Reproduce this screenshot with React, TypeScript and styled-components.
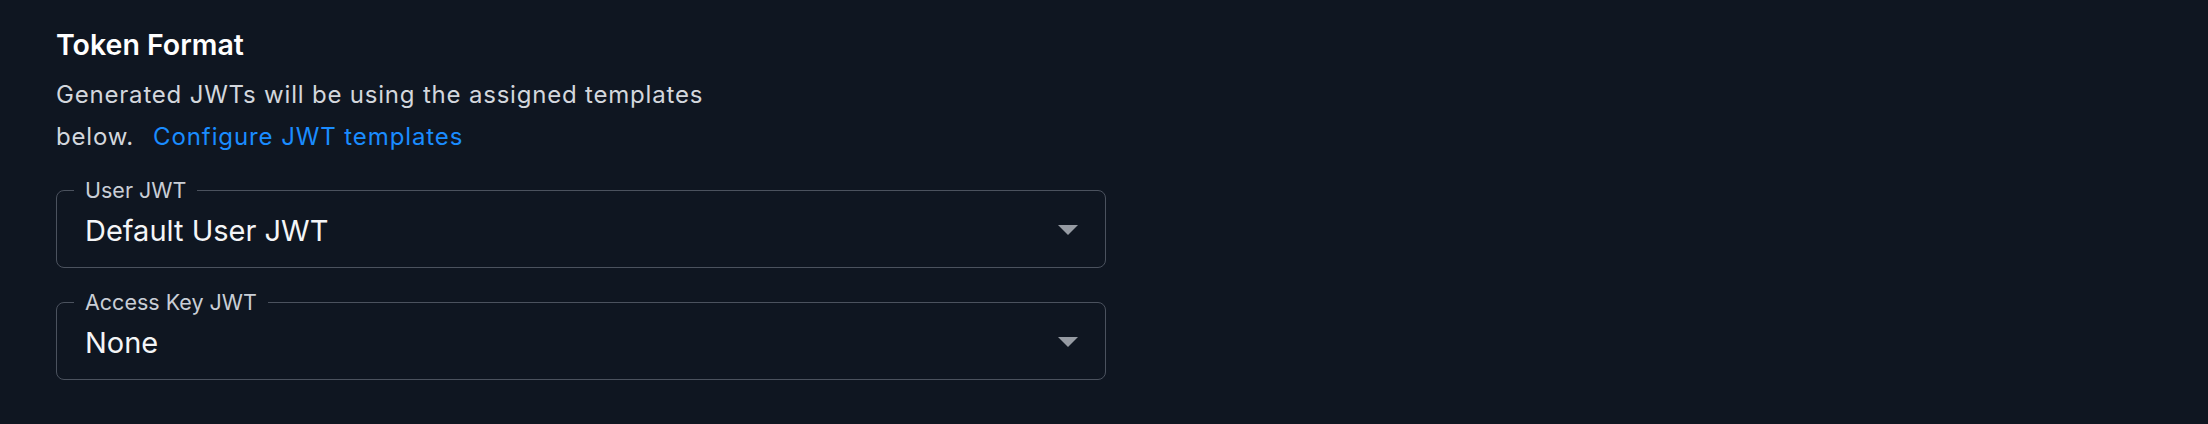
import React from "react";
import styled, { createGlobalStyle } from "styled-components";

const GlobalStyle = createGlobalStyle`
  html, body {
    margin: 0;
    padding: 0;
    background: #0f1621;
  }
  body {
    font-family: Inter, "Noto Sans", sans-serif;
    -webkit-font-smoothing: antialiased;
  }
`;

const Page = styled.div`
  min-height: 424px;
  background: #0f1621;
  padding: 25px 0 0 56px;
  box-sizing: border-box;
`;

const Section = styled.section`
  display: flex;
  flex-direction: column;
  width: 1050px;
`;

const Title = styled.h2`
  margin: 0;
  font-size: 28.5px;
  line-height: 40px;
  font-weight: 600;
  color: #ffffff;
  letter-spacing: 0;
`;

const Description = styled.p`
  margin: 9px 0 0;
  max-width: 700px;
  font-size: 24px;
  line-height: 42px;
  font-weight: 400;
  letter-spacing: 0.8px;
  color: #d3d7dd;
`;

const Link = styled.a`
  margin-left: 19px;
  letter-spacing: 0.9px;
  color: #1a8cff;
  text-decoration: none;
  cursor: pointer;
`;

const Fields = styled.div`
  display: flex;
  flex-direction: column;
  gap: 21px;
  margin-top: 19px;
`;

const Field = styled.fieldset`
  margin: 0;
  padding: 0 27px 0 28px;
  min-width: 0;
  border: 1.4px solid #4b525e;
  border-radius: 8px;
  display: block;
`;

const Legend = styled.legend`
  margin-left: -11px;
  padding: 0 11px;
  font-size: 21.5px;
  line-height: 26px;
  color: #c9ced6;
`;

const Row = styled.div`
  display: flex;
  align-items: center;
  justify-content: space-between;
  padding: 9.5px 0 18.5px;
`;

const Value = styled.span`
  font-size: 29px;
  line-height: 36px;
  color: #f4f5f7;
`;

const Caret = styled.svg`
  width: 20px;
  height: 10px;
  flex: none;
  margin-top: -1px;
`;

const SelectField: React.FC<{ label: string; value: string }> = ({ label, value }) => (
  <Field>
    <Legend>{label}</Legend>
    <Row>
      <Value>{value}</Value>
      <Caret viewBox="0 0 20 10">
        <polygon points="0,0 20,0 10,10" fill="#969ba3" />
      </Caret>
    </Row>
  </Field>
);

export default function App() {
  return (
    <>
      <GlobalStyle />
      <Page>
        <Section>
          <Title>Token Format</Title>
          <Description>
            Generated JWTs will be using the assigned templates below.
            <Link>Configure JWT templates</Link>
          </Description>
          <Fields>
            <SelectField label="User JWT" value="Default User JWT" />
            <SelectField label="Access Key JWT" value="None" />
          </Fields>
        </Section>
      </Page>
    </>
  );
}
